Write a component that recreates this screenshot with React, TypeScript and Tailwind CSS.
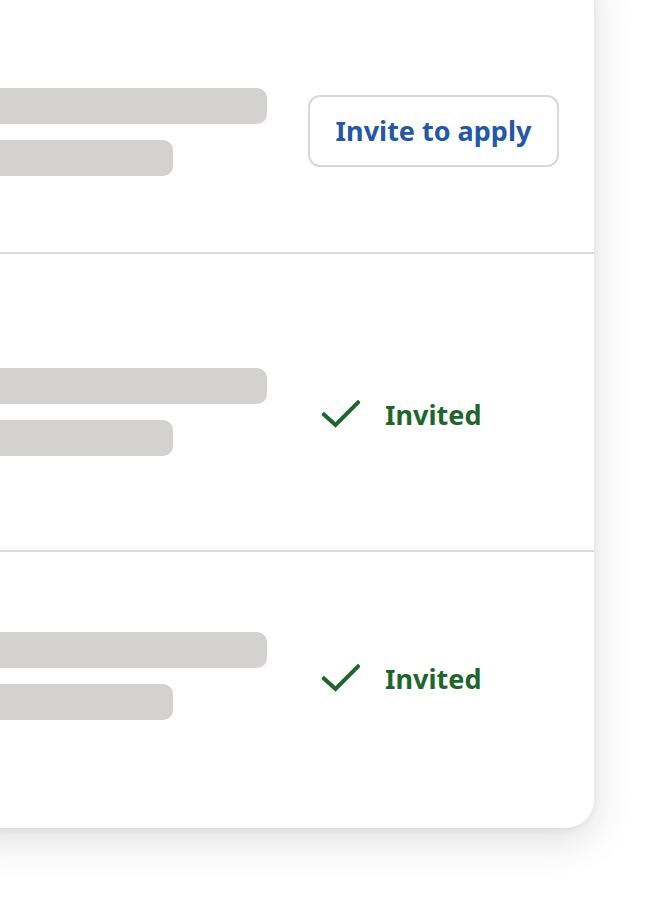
import React from "react";

function Bars() {
  return (
    <div className="flex flex-col gap-4 pl-5">
      <div className="h-9 w-[287px] rounded-[10px] bg-[#d4d2d0]" />
      <div className="h-9 w-[193px] rounded-[10px] bg-[#d4d2d0]" />
    </div>
  );
}

function Invited() {
  return (
    <div className="flex items-center gap-[25px] pl-[14px] pt-1 text-[#1f662c]">
      <svg width="38" height="28" viewBox="0 0 38 28" fill="none">
        <path d="M2 14.5 L13.5 25 L36 2.5" stroke="currentColor" strokeWidth="4" strokeLinecap="square" />
      </svg>
      <span className="text-[27px] font-bold leading-none">Invited</span>
    </div>
  );
}

export default function App() {
  return (
    <div className="h-[900px] overflow-hidden bg-white" style={{ fontFamily: '"Noto Sans", sans-serif' }}>
      <div className="-mt-[40px] -ml-[40px] w-[634px] rounded-[28px] bg-white shadow-[0_12px_40px_rgba(0,0,0,0.13),0_2px_6px_rgba(0,0,0,0.06)]">
        <div className="flex items-center gap-[41px] border-b-2 border-[#dcdbd9] pt-[128px] pb-[76px]">
          <Bars />
          <div className="w-[251px]">
            <button className="-mt-[2px] flex h-[72px] w-[251px] items-center justify-center rounded-[12px] border-2 border-[#d9d8d6] bg-white text-[27px] font-bold text-[#2557a7]">
              Invite to apply
            </button>
          </div>
        </div>
        <div className="flex items-center gap-[41px] border-b-2 border-[#dcdbd9] pt-[114px] pb-[94px]">
          <Bars />
          <div className="w-[251px]">
            <Invited />
          </div>
        </div>
        <div className="flex items-center gap-[41px] pt-[80px] pb-[108px]">
          <Bars />
          <div className="w-[251px]">
            <Invited />
          </div>
        </div>
      </div>
    </div>
  );
}
